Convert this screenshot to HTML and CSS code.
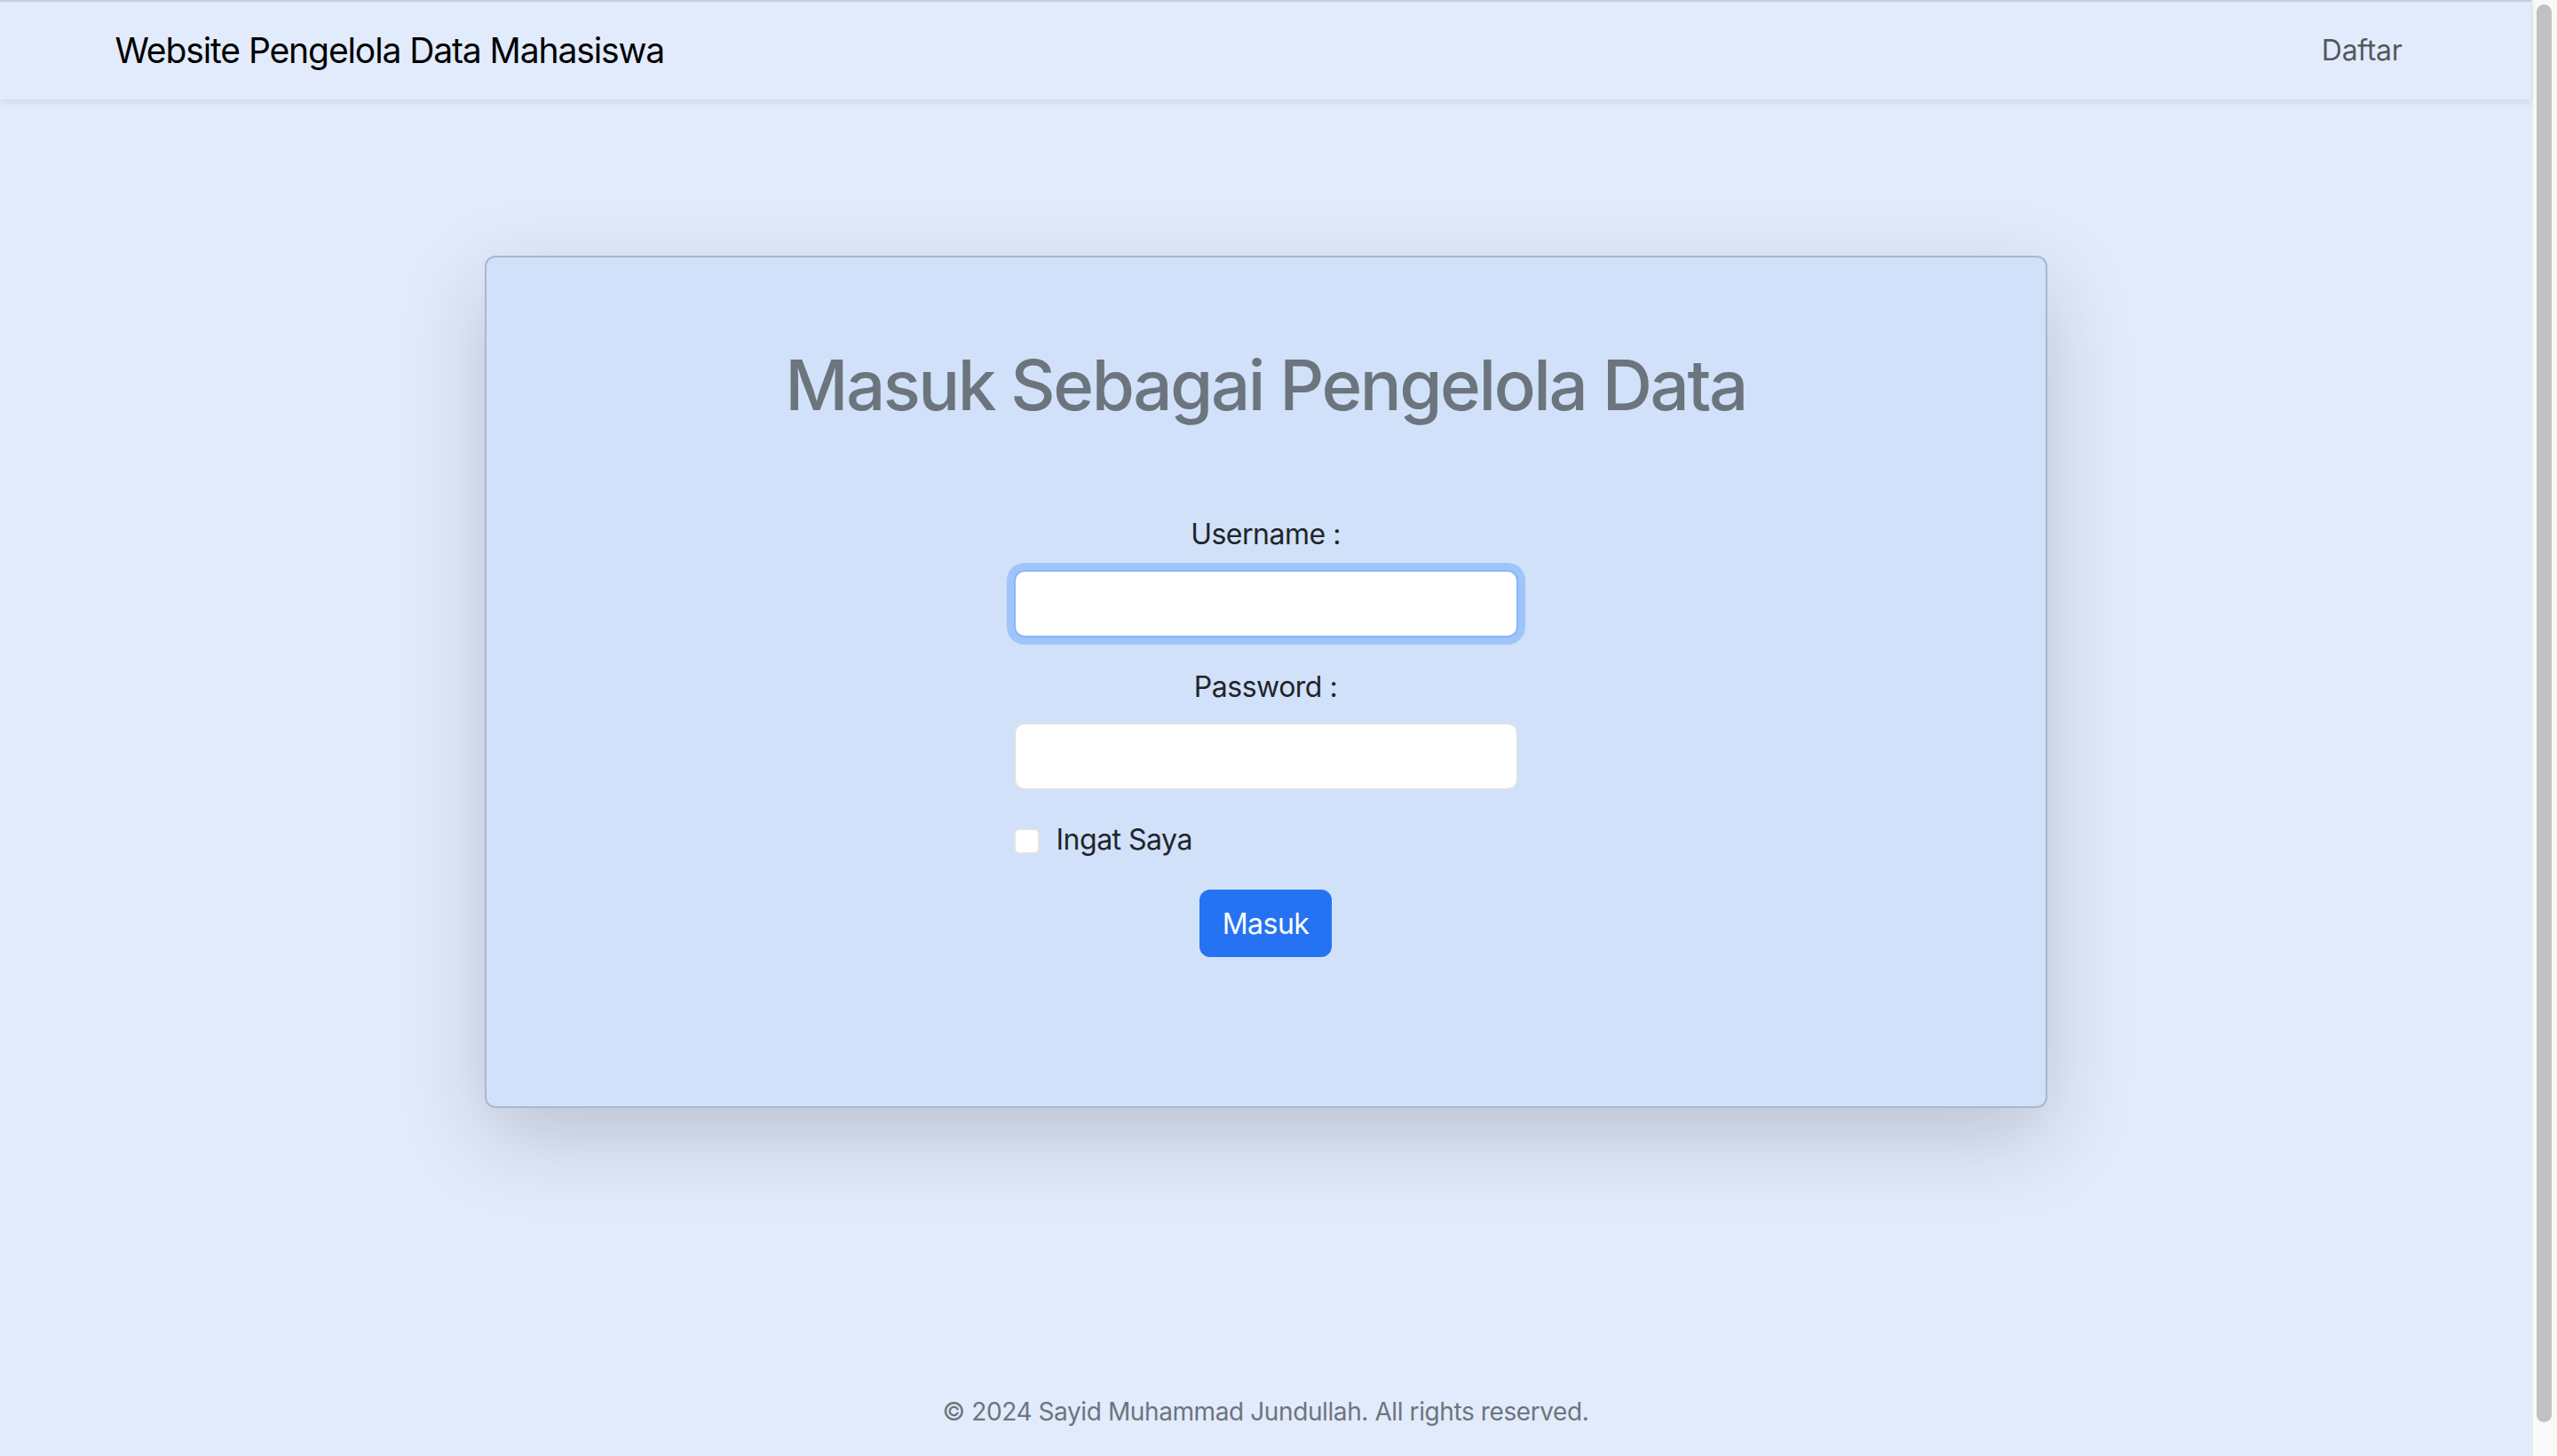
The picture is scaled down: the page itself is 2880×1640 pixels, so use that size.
FILE: index.html
```html
<!DOCTYPE html>
<html lang="id">
<head>
<meta charset="utf-8">
<title>Masuk - Website Pengelola Data Mahasiswa</title>
<link rel="stylesheet" href="styles.css">
</head>
<body>
  <div class="window">
    <div class="page">
      <nav class="navbar">
        <div class="nav-container">
          <a class="brand" href="#">Website Pengelola Data Mahasiswa</a>
          <a class="nav-link" href="#">Daftar</a>
        </div>
      </nav>

      <main class="main">
        <section class="card">
          <h1 class="card-title">Masuk Sebagai Pengelola Data</h1>
          <form class="login-form">
            <div class="field">
              <label class="field-label" for="username">Username :</label>
              <input class="field-input is-focused" type="text" id="username">
            </div>
            <div class="field">
              <label class="field-label" for="password">Password :</label>
              <input class="field-input" type="password" id="password">
            </div>
            <div class="check-row">
              <input class="check-box" type="checkbox" id="remember">
              <label class="check-label" for="remember">Ingat Saya</label>
            </div>
            <div class="actions">
              <button class="btn-primary" type="button">Masuk</button>
            </div>
          </form>
        </section>
      </main>

      <footer class="footer">
        <p class="footer-text">© 2024 Sayid Muhammad Jundullah. All rights reserved.</p>
      </footer>
    </div>
    <div class="scrollbar" aria-hidden="true">
      <div class="scrollbar-thumb"></div>
    </div>
  </div>
</body>
</html>
```

FILE: styles.css
```css
html,
body {
  margin: 0;
  height: 1640px;
  overflow: hidden;
}

body {
  background: #e2ebfc;
  font-family: Inter, "Liberation Sans", sans-serif;
  color: #212529;
}

.window {
  display: flex;
  height: 1640px;
}

.page {
  flex: 1;
  min-width: 0;
  display: flex;
  flex-direction: column;
}

.scrollbar {
  width: 29px;
  flex: none;
  box-sizing: border-box;
  padding: 5px 6px 38px 4px;
  background: #f9f9f9;
  border-left: 2px solid #ebebeb;
}

.scrollbar-thumb {
  height: 100%;
  background: #c1c1c1;
  border-radius: 9px;
}

.navbar {
  height: 110px;
  border-top: 2px solid #c6ccd8;
  background: #e2ebfc;
  box-shadow: 0 4px 8px rgba(0, 0, 0, 0.075);
  position: relative;
  z-index: 1;
}

.nav-container {
  max-width: 2640px;
  height: 100%;
  box-sizing: border-box;
  margin: 0 auto;
  padding: 0 24px;
  display: flex;
  align-items: center;
  justify-content: space-between;
}

.brand {
  font-size: 39px;
  line-height: 60px;
  color: #000;
  text-decoration: none;
  letter-spacing: -1.1px;
}

.nav-link {
  font-size: 32px;
  line-height: 48px;
  padding: 16px;
  color: rgba(0, 0, 0, 0.65);
  text-decoration: none;
  letter-spacing: -0.3px;
}

.main {
  flex: 1;
  padding-top: 176px;
}

.card {
  width: 1760px;
  box-sizing: border-box;
  margin: 0 auto;
  padding: 96px;
  background: #d1e1fa;
  border: 2px solid #aab7cf;
  border-radius: 12px;
  box-shadow: 0 32px 96px rgba(0, 0, 0, 0.175);
}

.card-title {
  margin: 0 0 16px;
  font-size: 78px;
  line-height: 96px;
  font-weight: 500;
  color: #6c757d;
  text-align: center;
  letter-spacing: -2.45px;
}

.login-form {
  width: 568px;
  margin: 96px auto 0;
}

.field {
  margin-bottom: 32px;
}

.field-label {
  display: block;
  margin-bottom: 16px;
  font-size: 32px;
  line-height: 48px;
  text-align: center;
  letter-spacing: -0.5px;
}

.field-input {
  display: block;
  width: 100%;
  height: 76px;
  box-sizing: border-box;
  margin: 0;
  padding: 12px 24px;
  font-family: inherit;
  font-size: 32px;
  background: #fff;
  border: 2px solid #dee2e6;
  border-radius: 12px;
  outline: none;
}

.field-input.is-focused {
  border-color: #86b7fe;
  box-shadow: 0 0 0 8px rgba(13, 110, 253, 0.25);
}

.check-row {
  display: flex;
  align-items: flex-start;
  margin-bottom: 32px;
}

.check-box {
  appearance: none;
  -webkit-appearance: none;
  width: 29px;
  height: 29px;
  margin: 11px 19px 0 0;
  flex: none;
  background: #fff;
  border: 2px solid #dfe3e9;
  border-radius: 6px;
}

.check-label {
  font-size: 32px;
  line-height: 48px;
  letter-spacing: -0.5px;
}

.actions {
  text-align: center;
  margin-bottom: 72px;
}

.btn-primary {
  height: 76px;
  padding: 0 24px;
  font-family: inherit;
  font-size: 32px;
  letter-spacing: -0.5px;
  color: #fff;
  background: #2573f2;
  border: 2px solid #2573f2;
  border-radius: 12px;
}

.footer {
  padding: 32px 0 29px;
}

.footer-text {
  margin: 0;
  font-size: 28px;
  line-height: 42px;
  color: #6c757d;
  text-align: center;
  letter-spacing: -0.4px;
}
```
